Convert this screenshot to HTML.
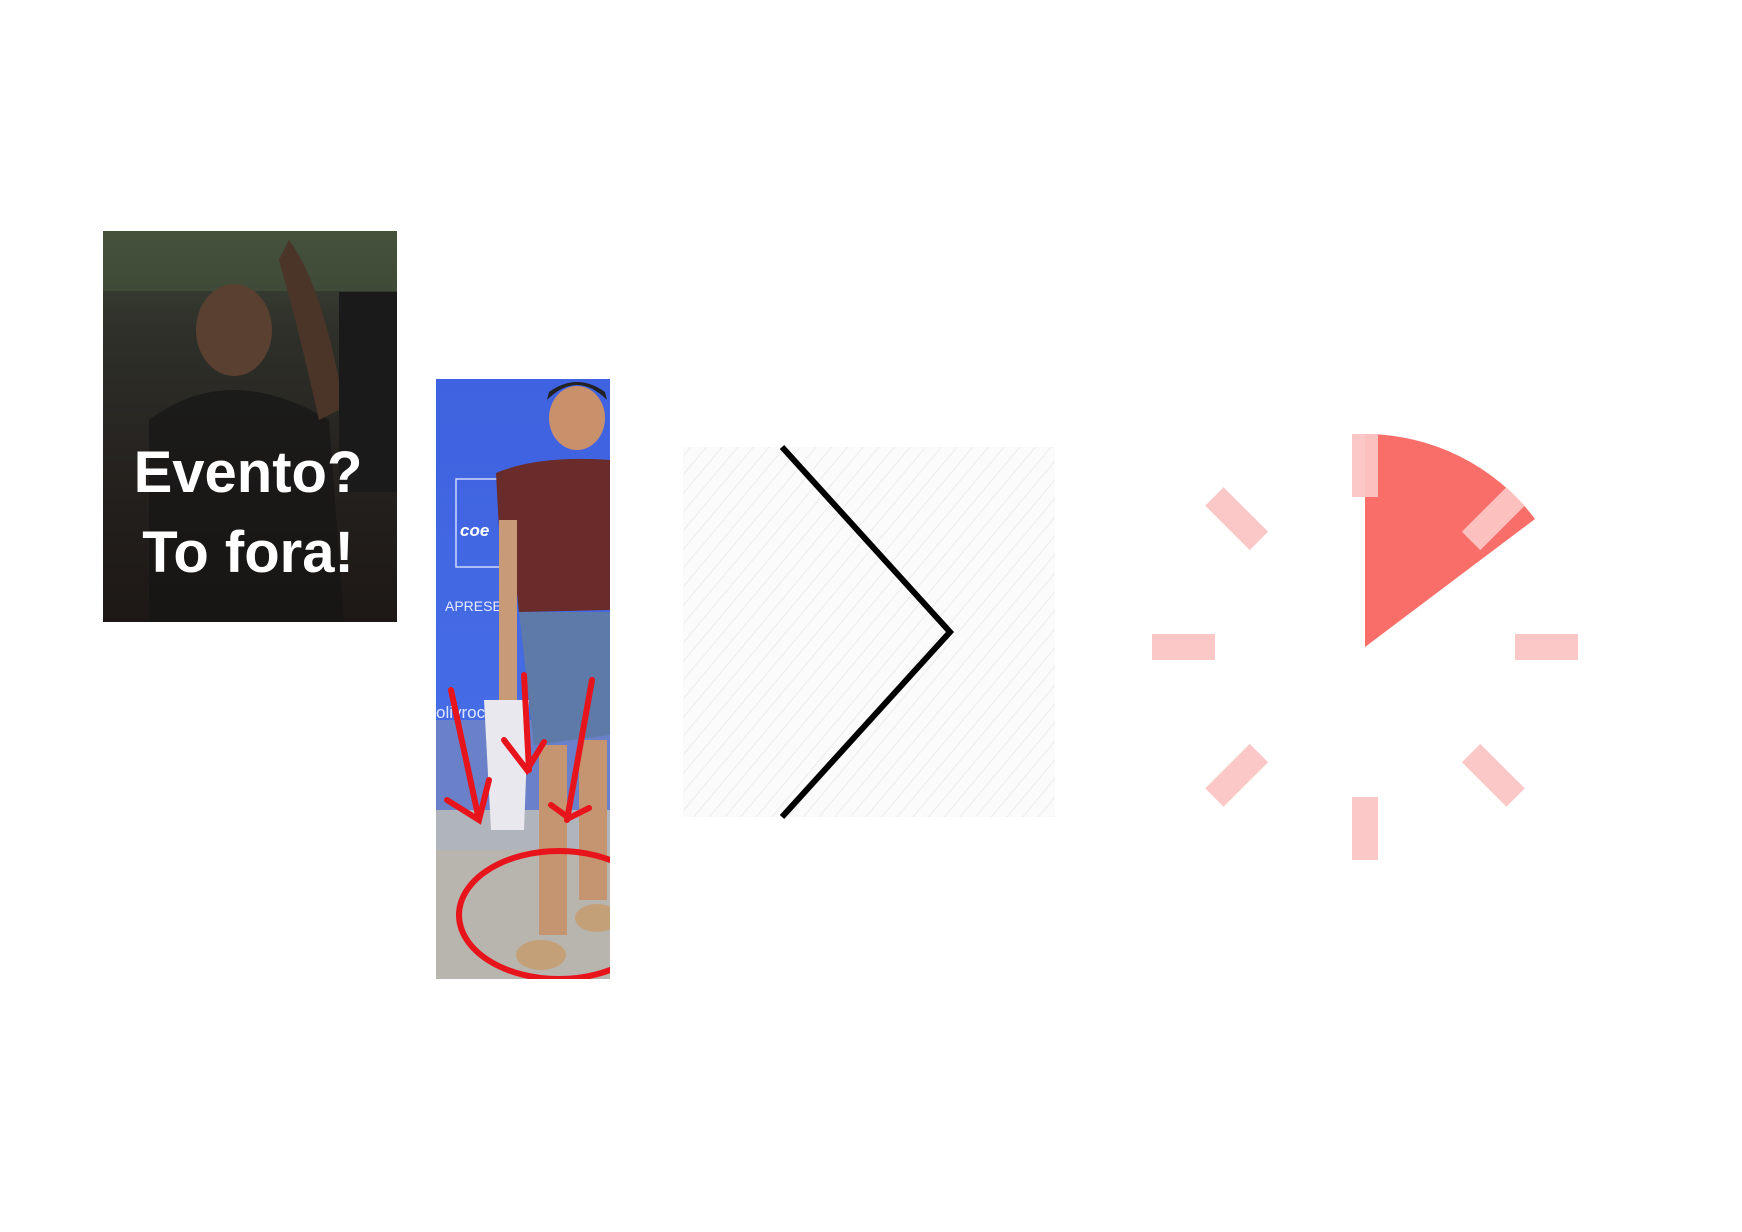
<!DOCTYPE html>
<html><head><meta charset="utf-8"><style>
html,body{margin:0;padding:0;background:#fff;width:1742px;height:1232px;overflow:hidden}
svg{position:absolute;left:0;top:0}
</style></head><body>
<svg width="1742" height="1232" viewBox="0 0 1742 1232" xmlns="http://www.w3.org/2000/svg">
<defs>
<pattern id="hatch" width="12" height="12" patternUnits="userSpaceOnUse" patternTransform="rotate(40)">
<rect width="12" height="12" fill="#fbfbfb"/><line x1="0" y1="0" x2="0" y2="12" stroke="#ececec" stroke-width="2"/>
</pattern>
<linearGradient id="p1" x1="0" y1="0" x2="0" y2="1">
<stop offset="0" stop-color="#3f4a38"/><stop offset="0.25" stop-color="#2f302a"/><stop offset="0.7" stop-color="#231f1c"/><stop offset="1" stop-color="#1d1815"/>
</linearGradient>
<linearGradient id="blue" x1="0" y1="0" x2="0" y2="1">
<stop offset="0" stop-color="#3f62e0"/><stop offset="1" stop-color="#4a74e8"/>
</linearGradient>
<clipPath id="c2"><rect x="436" y="379" width="174" height="600"/></clipPath>
</defs>
<!-- photo 1 -->
<rect x="103" y="231" width="294" height="391" fill="url(#p1)"/>
<rect x="103" y="231" width="294" height="60" fill="#4a5a40" opacity="0.5"/>
<ellipse cx="234" cy="330" rx="38" ry="46" fill="#5a4030"/>
<path d="M149 622 L149 420 Q229 360 329 420 L344 622Z" fill="#151515" opacity="0.7"/>
<path d="M289 240 Q319 280 339 380 L359 400 L319 420 Q299 330 279 260Z" fill="#4a3528"/>
<rect x="339" y="292" width="58" height="200" fill="#1a1a1a"/>
<text x="248" y="492" font-family="Liberation Sans, sans-serif" font-weight="bold" font-size="58" fill="#fff" text-anchor="middle">Evento?</text>
<text x="248" y="572" font-family="Liberation Sans, sans-serif" font-weight="bold" font-size="58" fill="#fff" text-anchor="middle">To fora!</text>
<!-- photo 2 -->
<g clip-path="url(#c2)">
<rect x="436" y="379" width="174" height="600" fill="url(#blue)"/>
<rect x="436" y="720" width="174" height="90" fill="#6a80c8"/>
<rect x="436" y="810" width="174" height="40" fill="#b0b4bc"/>
<rect x="436" y="850" width="174" height="129" fill="#b8b4ae"/>
<rect x="456" y="479" width="45" height="88" fill="none" stroke="#cfd8ff" stroke-width="1.5"/>
<text x="460" y="536" font-family="Liberation Sans, sans-serif" font-style="italic" font-weight="bold" font-size="17" fill="#fff">coe</text>
<text x="445" y="611" font-family="Liberation Sans, sans-serif" font-size="14" fill="#e8ecff">APRESE</text>
<text x="436" y="718" font-family="Liberation Sans, sans-serif" font-size="17" fill="#dfe6ff">olivroc</text>
<ellipse cx="577" cy="418" rx="28" ry="32" fill="#c9906c"/>
<path d="M547 400 Q577 370 607 400 L605 392 Q577 372 549 392Z" fill="#222"/>
<path d="M496 473 Q539 455 610 460 L610 610 L519 612 L509 520 L499 530Z" fill="#6a2c2a"/>
<rect x="499" y="520" width="18" height="180" fill="#c99a78"/>
<path d="M519 612 L610 612 L610 735 L534 745Z" fill="#5d7aa8"/>
<rect x="539" y="745" width="28" height="190" fill="#c49570"/>
<rect x="579" y="740" width="28" height="160" fill="#c49570"/>
<path d="M484 700 L529 700 L524 830 L491 830Z" fill="#e8e8ee"/>
<ellipse cx="541" cy="955" rx="25" ry="15" fill="#c4a078"/>
<ellipse cx="597" cy="918" rx="22" ry="14" fill="#c4a078"/>
<ellipse cx="559" cy="915" rx="100" ry="64" fill="none" stroke="#e8141c" stroke-width="6"/>
<g stroke="#e8141c" stroke-width="6" fill="none" stroke-linecap="round">
<path d="M451 690 L479 820 M447 800 L479 820 L489 780"/>
<path d="M524 675 L529 770 M504 740 L527 770 L544 742"/>
<path d="M592 680 L567 820 M551 805 L569 818 L589 808"/>
</g>
</g>
<!-- hatched box -->
<rect x="683" y="447" width="372" height="370" fill="url(#hatch)"/>
<polyline points="782,447 950,632 782,817" fill="none" stroke="#000" stroke-width="6"/>
<!-- clock -->
<path d="M1365 647 L1365 434 A213 213 0 0 1 1535 519 Z" fill="#f96e69"/>
<g stroke="#fcc5c5" stroke-width="26" opacity="0.95">
<g transform="translate(1365,647)">
<line x1="0" y1="-150" x2="0" y2="-213" transform="rotate(0)"/>
<line x1="0" y1="-150" x2="0" y2="-213" transform="rotate(45)"/>
<line x1="0" y1="-150" x2="0" y2="-213" transform="rotate(90)"/>
<line x1="0" y1="-150" x2="0" y2="-213" transform="rotate(135)"/>
<line x1="0" y1="-150" x2="0" y2="-213" transform="rotate(180)"/>
<line x1="0" y1="-150" x2="0" y2="-213" transform="rotate(225)"/>
<line x1="0" y1="-150" x2="0" y2="-213" transform="rotate(270)"/>
<line x1="0" y1="-150" x2="0" y2="-213" transform="rotate(315)"/>
</g>
</g>
</svg>
</body></html>
